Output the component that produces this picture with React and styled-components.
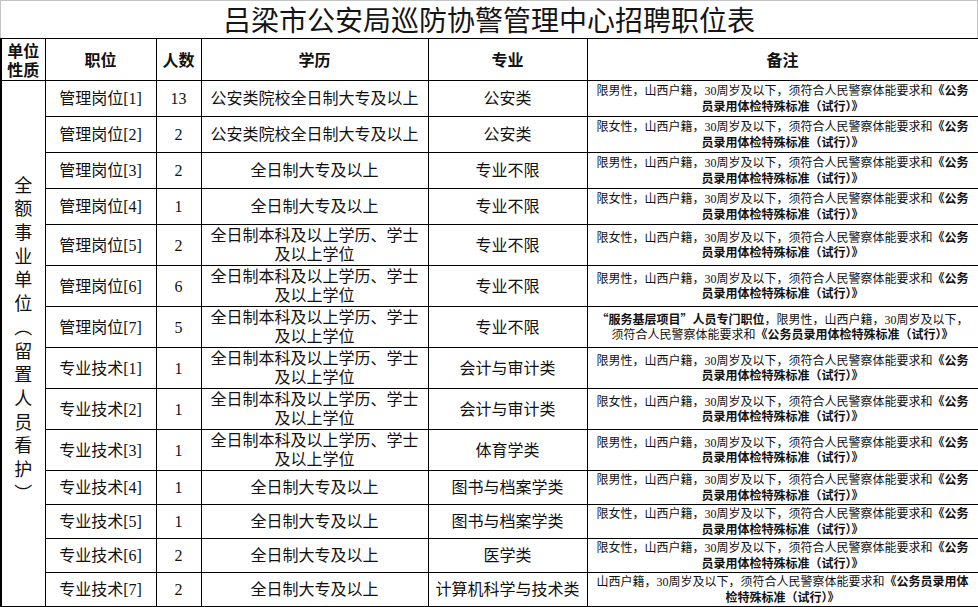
import React from 'react';
import styled, { createGlobalStyle } from 'styled-components';

const GlobalStyle = createGlobalStyle`
  html, body {
    margin: 0;
    padding: 0;
    background: #fff;
  }

  body {
    font-family: "Liberation Serif", "Noto Sans CJK SC", serif;
    color: #111;
  }
`;

const Sheet = styled.div`
  width: 978px;
  height: 607px;
  overflow: hidden;
`;

const Title = styled.h1`
  box-sizing: border-box;
  height: 38px;
  margin: 0;
  border: 1px solid #c4c4c4;
  border-bottom: none;
  font-family: "Noto Sans CJK SC", sans-serif;
  font-size: 28px;
  font-weight: 400;
  line-height: 36px;
  text-align: center;
  color: #151515;
`;

const Table = styled.table`
  width: 977px;
  border-collapse: collapse;
  table-layout: fixed;
`;

const Row = styled.tr`
  height: ${props => props.$h}px;
`;

const Cell = styled.td`
  box-sizing: border-box;
  padding: 0;
  border: 1px solid #000;
  text-align: center;
  vertical-align: middle;
  font-size: 16px;
  line-height: 19px;
  white-space: nowrap;
`;

const HeadCell = styled(Cell).attrs({ as: 'th' })`
  font-family: "Noto Sans CJK SC", sans-serif;
  font-weight: 700;
  line-height: 19px;
  ${props => props.$first && 'border-left-width: 2px;'}
`;

const UnitCell = styled(Cell)`
  border-left-width: 2px;
`;

const VerticalText = styled.div`
  display: flex;
  flex-direction: column;
  align-items: center;
  padding-bottom: 10px;
  font-family: "Noto Sans CJK SC", sans-serif;
  font-size: 18px;
`;

const Char = styled.span`
  display: block;
  height: 23.7px;
  line-height: 23.7px;
`;

const NoteCell = styled(Cell)`
  padding: 0 4px;
  font-size: 12px;
  line-height: 13.5px;
`;

const B = styled.b`
  font-family: "Noto Sans CJK SC", sans-serif;
  font-weight: 700;
`;

const COLS = [44, 111, 45, 227, 159, 391];

const UNIT = '全额事业单位︵留置人员看护︶';

const BACHELOR = ['全日制本科及以上学历、学士', '及以上学位'];
const COLLEGE = ['全日制大专及以上'];
const POLICE = ['公安类院校全日制大专及以上'];

const rows = [
  { pos: '管理岗位[1]', n: '13', edu: POLICE, major: '公安类', note: 'male', h: 36 },
  { pos: '管理岗位[2]', n: '2', edu: POLICE, major: '公安类', note: 'female', h: 36 },
  { pos: '管理岗位[3]', n: '2', edu: COLLEGE, major: '专业不限', note: 'male', h: 36 },
  { pos: '管理岗位[4]', n: '1', edu: COLLEGE, major: '专业不限', note: 'female', h: 36 },
  { pos: '管理岗位[5]', n: '2', edu: BACHELOR, major: '专业不限', note: 'female', h: 41 },
  { pos: '管理岗位[6]', n: '6', edu: BACHELOR, major: '专业不限', note: 'male', h: 41 },
  { pos: '管理岗位[7]', n: '5', edu: BACHELOR, major: '专业不限', note: 'service', h: 41 },
  { pos: '专业技术[1]', n: '1', edu: BACHELOR, major: '会计与审计类', note: 'male', h: 41 },
  { pos: '专业技术[2]', n: '1', edu: BACHELOR, major: '会计与审计类', note: 'female', h: 41 },
  { pos: '专业技术[3]', n: '1', edu: BACHELOR, major: '体育学类', note: 'male', h: 41 },
  { pos: '专业技术[4]', n: '1', edu: COLLEGE, major: '图书与档案学类', note: 'male', h: 34 },
  { pos: '专业技术[5]', n: '1', edu: COLLEGE, major: '图书与档案学类', note: 'female', h: 34 },
  { pos: '专业技术[6]', n: '2', edu: COLLEGE, major: '医学类', note: 'female', h: 34 },
  { pos: '专业技术[7]', n: '2', edu: COLLEGE, major: '计算机科学与技术类', note: 'open', h: 34 },
];

const Note = ({ kind }) => {
  if (kind === 'service') {
    return (
      <>
        <B>“服务基层项目”人员专门职位</B>，限男性，山西户籍，30周岁及以下，<br />
        须符合人民警察体能要求和<B>《公务员录用体检特殊标准（试行）》</B>
      </>
    );
  }
  if (kind === 'open') {
    return (
      <>
        山西户籍，30周岁及以下，须符合人民警察体能要求和<B>《公务员录用体</B><br />
        <B>检特殊标准（试行）》</B>
      </>
    );
  }
  const sex = kind === 'male' ? '限男性' : '限女性';
  return (
    <>
      {sex}，山西户籍，30周岁及以下，须符合人民警察体能要求和<B>《公务</B><br />
      <B>员录用体检特殊标准（试行）》</B>
    </>
  );
};

const App = () => {
  return (
    <Sheet>
      <GlobalStyle />
      <Title>吕梁市公安局巡防协警管理中心招聘职位表</Title>
      <Table>
        <colgroup>
          {COLS.map((w, i) => <col key={i} style={{ width: w }} />)}
        </colgroup>
        <thead>
          <Row $h={42}>
            <HeadCell $first>单位<br />性质</HeadCell>
            <HeadCell>职位</HeadCell>
            <HeadCell>人数</HeadCell>
            <HeadCell>学历</HeadCell>
            <HeadCell>专业</HeadCell>
            <HeadCell>备注</HeadCell>
          </Row>
        </thead>
        <tbody>
          {rows.map((r, i) => (
            <Row key={r.pos} $h={r.h}>
              {i === 0 && (
                <UnitCell rowSpan={rows.length}>
                  <VerticalText>
                    {[...UNIT].map((c, j) => <Char key={j}>{c}</Char>)}
                  </VerticalText>
                </UnitCell>
              )}
              <Cell>{r.pos}</Cell>
              <Cell>{r.n}</Cell>
              <Cell>
                {r.edu.map((line, j) => (
                  <React.Fragment key={j}>
                    {j > 0 && <br />}
                    {line}
                  </React.Fragment>
                ))}
              </Cell>
              <Cell>{r.major}</Cell>
              <NoteCell><Note kind={r.note} /></NoteCell>
            </Row>
          ))}
        </tbody>
      </Table>
    </Sheet>
  );
};

export default App;
